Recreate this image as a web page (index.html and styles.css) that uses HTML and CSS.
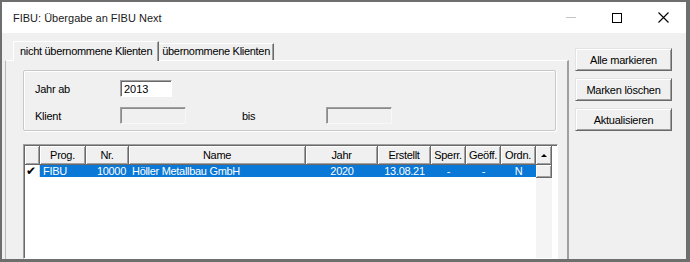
FILE: index.html
```html
<!DOCTYPE html>
<html>
<head>
    <title>FIBU: Übergabe an FIBU Next</title>
    <link rel="stylesheet" href="styles.css">
</head>
<body>
    <div class="window">
        <div class="titlebar">
            <span class="title">FIBU: Übergabe an FIBU Next</span>
            <div class="title-buttons">
                <span class="title-btn"><span class="min-icon"></span></span>
                <span class="title-btn">
                    <svg width="10" height="10" viewBox="0 0 10 10"><rect x="0.5" y="0.5" width="9" height="9" fill="none" stroke="#000" stroke-width="1"/></svg>
                </span>
                <span class="title-btn">
                    <svg width="11" height="11" viewBox="0 0 11 11"><path d="M0.5 0.5 L10.5 10.5 M10.5 0.5 L0.5 10.5" stroke="#000" stroke-width="1.1"/></svg>
                </span>
            </div>
        </div>
        <div class="content">
            <div class="main">
                <div class="tabs">
                    <div class="tab active">nicht übernommene Klienten</div>
                    <div class="tab">übernommene Klienten</div>
                </div>
                <div class="tab-panel">
                    <div class="groupbox">
                        <label class="field-label">Jahr ab</label>
                        <input class="field short" type="text" value="2013">
                        <span></span><span></span><span></span>
                        <label class="field-label">Klient</label>
                        <input class="field" type="text" disabled>
                        <span></span>
                        <label class="field-label">bis</label>
                        <input class="field" type="text" disabled>
                    </div>
                    <div class="list">
                        <div class="list-table">
                            <div class="list-row header">
                                <div class="cell"></div>
                                <div class="cell">Prog.</div>
                                <div class="cell">Nr.</div>
                                <div class="cell">Name</div>
                                <div class="cell">Jahr</div>
                                <div class="cell">Erstellt</div>
                                <div class="cell">Sperr.</div>
                                <div class="cell">Geöff.</div>
                                <div class="cell">Ordn.</div>
                            </div>
                            <div class="list-row selected">
                                <div class="cell check">✔</div>
                                <div class="cell left">FIBU</div>
                                <div class="cell right">10000</div>
                                <div class="cell left">Höller Metallbau GmbH</div>
                                <div class="cell">2020</div>
                                <div class="cell">13.08.21</div>
                                <div class="cell">-</div>
                                <div class="cell">-</div>
                                <div class="cell">N</div>
                            </div>
                        </div>
                        <div class="vscroll">
                            <div class="scroll-btn"><span class="arrow-up"></span></div>
                            <div class="scroll-thumb"></div>
                        </div>
                    </div>
                </div>
            </div>
            <div class="side">
                <button>Alle markieren</button>
                <button>Marken löschen</button>
                <button>Aktualisieren</button>
            </div>
        </div>
    </div>
</body>
</html>
```

FILE: styles.css
```css
body {
    margin: 0;
    font-family: "Liberation Sans", Arial, sans-serif;
    font-size: 11px;
    color: #000;
}
.window {
    width: 690px;
    height: 262px;
    box-sizing: border-box;
    border: 2px solid #6e6e6e;
    border-right-width: 4px;
    border-bottom-width: 3px;
    display: flex;
    flex-direction: column;
    overflow: hidden;
    background: #f0f0f0;
}
.titlebar {
    height: 31px;
    flex: none;
    background: #fff;
    display: flex;
    align-items: center;
    justify-content: space-between;
}
.title {
    padding-left: 11px;
    color: #1a1a1a;
}
.title-buttons {
    display: flex;
    height: 100%;
}
.title-btn {
    width: 46px;
    display: flex;
    align-items: center;
    justify-content: center;
}
.min-icon {
    width: 10px;
    height: 1px;
    background: #c4c4c4;
}
.content {
    flex: 1;
    display: flex;
    min-height: 0;
}
.main {
    width: 567px;
    padding: 8px 0 0 3px;
    box-sizing: border-box;
    display: flex;
    flex-direction: column;
}
.tabs {
    display: flex;
    align-items: flex-end;
    padding-left: 8px;
    letter-spacing: -0.3px;
}
.tab {
    height: 16px;
    line-height: 15px;
    padding: 0 3px;
    border-top: 1px solid #fff;
    border-right: 1px solid #696969;
    box-shadow: inset -1px 0 0 #a0a0a0;
}
.tab.active {
    height: 19px;
    line-height: 19px;
    padding: 0 6px;
    border-left: 1px solid #fff;
    margin-bottom: -1px;
    position: relative;
    background: #f0f0f0;
}
.tab-panel {
    flex: 1;
    border-top: 1px solid #fff;
    border-left: 1px solid #b9b9b9;
    border-right: 2px solid #a0a0a0;
    padding: 9px 0 0 17px;
    display: flex;
    flex-direction: column;
    min-height: 0;
}
.groupbox {
    width: 533px;
    height: 61px;
    box-sizing: border-box;
    border: 1px solid #c8c8c8;
    border-radius: 2px;
    box-shadow: 1px 1px 0 #fff, inset 1px 1px 0 #fff;
    padding: 9px 0 0 11px;
    display: grid;
    grid-template-columns: 85px 66px 56px 84px 66px;
    grid-template-rows: 17px 17px;
    row-gap: 10px;
    align-items: center;
    letter-spacing: -0.25px;
}
.field {
    height: 17px;
    width: 66px;
    box-sizing: border-box;
    margin: 0;
    padding: 0 3px;
    border: 1px solid;
    border-color: #a0a0a0 #fff #fff #a0a0a0;
    box-shadow: inset 1px 1px 0 #696969;
    background: #fff;
    font-family: inherit;
    font-size: 11px;
    color: #000;
}
.field.short {
    width: 52px;
}
.field:disabled {
    background: #f0f0f0;
    border-color: #a0a0a0 #f8f8f8 #f8f8f8 #a0a0a0;
    box-shadow: inset 1px 1px 0 #8a8a8a;
}
.list {
    margin-top: 13px;
    width: 532px;
    flex: 1;
    border: 1px solid;
    border-color: #a0a0a0 #fff #fff #a0a0a0;
    box-shadow: inset 1px 1px 0 #696969;
    padding: 1px 0 0 1px;
    background: #fff;
    display: flex;
    letter-spacing: -0.3px;
}
.list-table {
    width: 511px;
}
.list-row {
    display: grid;
    grid-template-columns: 15px 46px 43px 177px 72px 53px 35px 35px 35px;
}
.list-row.header .cell {
    height: 19px;
    line-height: 18px;
    box-sizing: border-box;
    background: #f0f0f0;
    border-right: 1px solid #696969;
    border-bottom: 1px solid #696969;
    box-shadow: inset 1px 1px 0 #fff, inset -1px -1px 0 #a0a0a0;
}
.cell {
    text-align: center;
    white-space: nowrap;
    overflow: hidden;
}
.list-row.selected .cell {
    height: 12px;
    line-height: 12px;
    background: #0a78d6;
    color: #fff;
}
.list-row.selected .cell.check {
    background: #fff;
    color: #000;
    font-family: "DejaVu Sans", sans-serif;
    font-size: 12px;
    line-height: 13px;
    text-align: left;
    padding-left: 1px;
    box-shadow: inset -1px 0 0 #dcdcdc;
}
.cell.left {
    text-align: left;
    padding-left: 3px;
}
.cell.right {
    text-align: right;
    padding-right: 3px;
}
.vscroll {
    width: 16px;
    background: #f4f4f4;
}
.scroll-btn,
.scroll-thumb {
    box-sizing: border-box;
    background: #f0f0f0;
    border-right: 1px solid #696969;
    border-bottom: 1px solid #696969;
    box-shadow: inset 1px 1px 0 #fff, inset -1px -1px 0 #a0a0a0;
}
.scroll-btn {
    height: 19px;
    display: flex;
    align-items: center;
    justify-content: center;
}
.scroll-thumb {
    height: 13px;
}
.arrow-up {
    width: 0;
    height: 0;
    border-left: 3px solid transparent;
    border-right: 3px solid transparent;
    border-bottom: 3px solid #000;
}
.side {
    flex: 1;
    padding: 15px 0 0 6px;
    display: flex;
    flex-direction: column;
    gap: 7px;
}
button {
    width: 97px;
    height: 23px;
    padding: 0;
    background: #f0f0f0;
    border: 1px solid;
    border-color: #e3e3e3 #696969 #696969 #e3e3e3;
    box-shadow: inset 1px 1px 0 #fff, inset -1px -1px 0 #a0a0a0;
    font-family: inherit;
    font-size: 11px;
    letter-spacing: -0.25px;
    color: #000;
}
```
